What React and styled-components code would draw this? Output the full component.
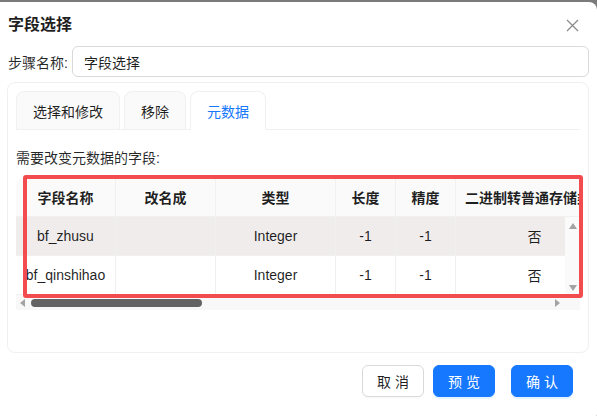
import React from 'react';
import styled, { createGlobalStyle } from 'styled-components';

const GlobalStyle = createGlobalStyle`
  html, body {
    margin: 0;
    padding: 0;
    background: #7b7b7b;
    font-family: "Liberation Sans", "Noto Sans CJK SC", sans-serif;
    color: rgba(0, 0, 0, 0.88);
  }
  * { box-sizing: border-box; }
`;

const columns = [
  { key: 'name', title: '字段名称', width: 100 },
  { key: 'rename', title: '改名成', width: 100 },
  { key: 'type', title: '类型', width: 120 },
  { key: 'length', title: '长度', width: 60 },
  { key: 'precision', title: '精度', width: 60 },
  { key: 'binary', title: '二进制转普通存储类型', width: 158 },
];

const rows = [
  { name: 'bf_zhusu', rename: '', type: 'Integer', length: '-1', precision: '-1', binary: '否' },
  { name: 'bf_qinshihao', rename: '', type: 'Integer', length: '-1', precision: '-1', binary: '否' },
];

const gridCols = columns.map((c) => `${c.width}px`).join(' ');

const App = () => {
  return (
    <>
      <GlobalStyle />
      <Dialog>
        <Header>
          <Title>字段选择</Title>
          <CloseButton>
            <svg width="13" height="13" viewBox="0 0 13 13">
              <path d="M1 1L12 12M12 1L1 12" stroke="#8c8c8c" strokeWidth="1.3" fill="none" />
            </svg>
          </CloseButton>
        </Header>

        <FieldRow>
          <Label>步骤名称:</Label>
          <Input defaultValue="字段选择" />
        </FieldRow>

        <Panel>
          <Tabs>
            <Tab>选择和修改</Tab>
            <Tab>移除</Tab>
            <Tab $active>元数据</Tab>
          </Tabs>

          <Caption>需要改变元数据的字段:</Caption>

          <TableWrap>
            <HeadClip>
              <Row $cols={gridCols} $head>
                {columns.map((c) => (
                  <HeadCell key={c.key} $left={c.key === 'binary'}>
                    {c.title}
                  </HeadCell>
                ))}
              </Row>
            </HeadClip>
            <BodyArea>
              <BodyClip>
                {rows.map((r, i) => (
                  <Row key={r.name} $cols={gridCols} $hover={i === 0}>
                    {columns.map((c) => (
                      <Cell key={c.key}>{r[c.key]}</Cell>
                    ))}
                  </Row>
                ))}
              </BodyClip>
              <VScroll>
                <Arrow $dir="up" />
                <Arrow $dir="down" />
              </VScroll>
            </BodyArea>
            <HScroll>
              <Arrow $dir="left" />
              <Thumb />
              <Arrow $dir="right" />
            </HScroll>
            <Highlight />
          </TableWrap>
        </Panel>

        <Footer>
          <Button>取 消</Button>
          <Button $primary>预 览</Button>
          <Button $primary $wide>确 认</Button>
        </Footer>
      </Dialog>
    </>
  );
};

export default App;

const Dialog = styled.div`
  margin-top: 2px;
  width: 597px;
  height: 420px;
  background: #fff;
  border-radius: 0 8px 8px 0;
  padding: 12px 8px 0 8px;
`;

const Header = styled.div`
  display: flex;
  align-items: center;
  justify-content: space-between;
  height: 22px;
`;

const Title = styled.div`
  font-size: 16px;
  font-weight: 700;
  color: rgba(0, 0, 0, 0.88);
  line-height: 22px;
`;

const CloseButton = styled.div`
  display: flex;
  align-items: center;
  justify-content: center;
  width: 16px;
  height: 16px;
  margin-right: 9px;
`;

const FieldRow = styled.div`
  display: flex;
  align-items: center;
  margin-top: 10px;
`;

const Label = styled.label`
  width: 64px;
  font-size: 14px;
  color: rgba(0, 0, 0, 0.85);
  white-space: nowrap;
`;

const Input = styled.input`
  flex: 1;
  height: 31px;
  border: 1px solid #d9d9d9;
  border-radius: 6px;
  padding: 0 11px;
  font-size: 14px;
  font-family: inherit;
  color: rgba(0, 0, 0, 0.88);
  outline: none;
`;

const Panel = styled.div`
  margin-top: 5px;
  margin-left: -1px;
  height: 271px;
  border: 1px solid #f0f0f0;
  border-radius: 8px;
  padding: 8px 8px 0 8px;
`;

const Tabs = styled.div`
  display: flex;
  gap: 4px;
  height: 39px;
  border-bottom: 1px solid #f0f0f0;
`;

const Tab = styled.div`
  display: flex;
  align-items: center;
  padding: 0 16px;
  font-size: 14px;
  color: ${(p) => (p.$active ? '#1677ff' : 'rgba(0, 0, 0, 0.88)')};
  background: ${(p) => (p.$active ? '#fff' : '#fafafa')};
  border: 1px solid #f0f0f0;
  border-bottom-color: ${(p) => (p.$active ? '#fff' : '#f0f0f0')};
  border-radius: 8px 8px 0 0;
  margin-bottom: -1px;
`;

const Caption = styled.div`
  margin-top: 18px;
  font-size: 14px;
  line-height: 20px;
  color: rgba(0, 0, 0, 0.85);
`;

const TableWrap = styled.div`
  position: relative;
  margin-top: 10px;
  width: 564px;
`;

const HeadClip = styled.div`
  overflow: hidden;
  border-radius: 8px 8px 0 0;
`;

const BodyArea = styled.div`
  display: flex;
`;

const BodyClip = styled.div`
  flex: 1;
  overflow: hidden;
`;

const Row = styled.div`
  display: grid;
  grid-template-columns: ${(p) => p.$cols};
  height: 39px;
  background: ${(p) => (p.$head ? '#fafafa' : p.$hover ? '#f1ecec' : '#fff')};
  border-bottom: 1px solid #f0f0f0;
`;

const HeadCell = styled.div`
  display: flex;
  align-items: center;
  justify-content: ${(p) => (p.$left ? 'flex-start' : 'center')};
  padding-left: ${(p) => (p.$left ? '9px' : '0')};
  font-size: 14px;
  font-weight: 700;
  color: rgba(0, 0, 0, 0.88);
  white-space: nowrap;
  overflow: hidden;
  border-right: 1px solid #f0f0f0;
`;

const Cell = styled.div`
  display: flex;
  align-items: center;
  justify-content: center;
  font-size: 14px;
  color: rgba(0, 0, 0, 0.88);
  white-space: nowrap;
  border-right: 1px solid #f0f0f0;
`;

const VScroll = styled.div`
  width: 15px;
  background: #fafafa;
  display: flex;
  flex-direction: column;
  justify-content: space-between;
  align-items: center;
  padding: 6px 0 4px;
`;

const HScroll = styled.div`
  display: flex;
  align-items: center;
  height: 15px;
  background: #f8f8f8;
  padding: 0 20px 0 4px;
`;

const Thumb = styled.div`
  width: 171px;
  height: 8px;
  margin-left: 6px;
  margin-right: auto;
  border-radius: 4px;
  background: #636363;
`;

const arrowShape = {
  up: 'border-left: 4px solid transparent; border-right: 4px solid transparent; border-bottom: 6px solid #a3a3a3;',
  down: 'border-left: 4px solid transparent; border-right: 4px solid transparent; border-top: 6px solid #a3a3a3;',
  left: 'border-top: 4px solid transparent; border-bottom: 4px solid transparent; border-right: 5px solid #a3a3a3;',
  right: 'border-top: 4px solid transparent; border-bottom: 4px solid transparent; border-left: 5px solid #a3a3a3;',
};

const Arrow = styled.div`
  width: 0;
  height: 0;
  ${(p) => arrowShape[p.$dir]}
`;

const Highlight = styled.div`
  position: absolute;
  left: 7px;
  top: -3px;
  width: 560px;
  height: 123px;
  border: 4px solid #f34c4f;
  border-radius: 3px;
  pointer-events: none;
`;

const Footer = styled.div`
  display: flex;
  justify-content: flex-end;
  gap: 9px;
  margin-top: 12px;
  padding-right: 16px;
`;

const Button = styled.button`
  width: 62px;
  height: 32px;
  border-radius: 6px;
  font-size: 14px;
  font-family: inherit;
  border: 1px solid ${(p) => (p.$primary ? '#1677ff' : '#d9d9d9')};
  background: ${(p) => (p.$primary ? '#1677ff' : '#fff')};
  color: ${(p) => (p.$primary ? '#fff' : 'rgba(0, 0, 0, 0.88)')};
  box-shadow: ${(p) => (p.$primary ? '0 2px 0 rgba(5, 145, 255, 0.1)' : '0 2px 0 rgba(0, 0, 0, 0.02)')};
  margin-left: ${(p) => (p.$wide ? '7px' : '0')};
`;
